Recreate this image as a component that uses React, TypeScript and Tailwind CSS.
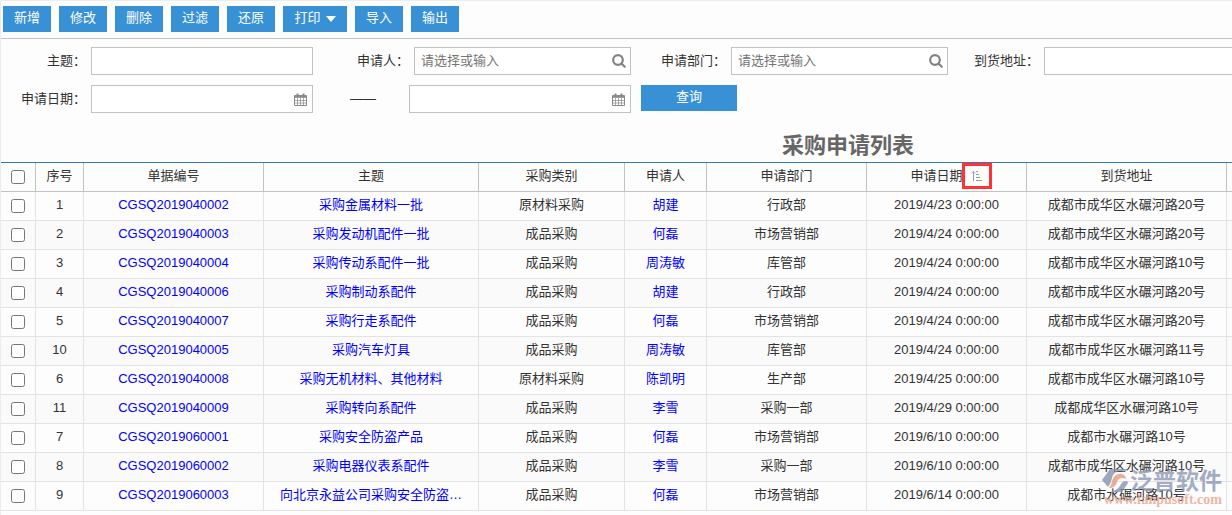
import { useState } from 'react'
import clsx from 'clsx'

type RequestRow = {
  no: number
  code: string
  subject: string
  category: string
  applicant: string
  department: string
  date: string
  address: string
}

const rows: RequestRow[] = [
  { no: 1, code: 'CGSQ2019040002', subject: '采购金属材料一批', category: '原材料采购', applicant: '胡建', department: '行政部', date: '2019/4/23 0:00:00', address: '成都市成华区水碾河路20号' },
  { no: 2, code: 'CGSQ2019040003', subject: '采购发动机配件一批', category: '成品采购', applicant: '何磊', department: '市场营销部', date: '2019/4/24 0:00:00', address: '成都市成华区水碾河路20号' },
  { no: 3, code: 'CGSQ2019040004', subject: '采购传动系配件一批', category: '成品采购', applicant: '周涛敏', department: '库管部', date: '2019/4/24 0:00:00', address: '成都市成华区水碾河路10号' },
  { no: 4, code: 'CGSQ2019040006', subject: '采购制动系配件', category: '成品采购', applicant: '胡建', department: '行政部', date: '2019/4/24 0:00:00', address: '成都市成华区水碾河路20号' },
  { no: 5, code: 'CGSQ2019040007', subject: '采购行走系配件', category: '成品采购', applicant: '何磊', department: '市场营销部', date: '2019/4/24 0:00:00', address: '成都市成华区水碾河路20号' },
  { no: 10, code: 'CGSQ2019040005', subject: '采购汽车灯具', category: '成品采购', applicant: '周涛敏', department: '库管部', date: '2019/4/24 0:00:00', address: '成都市成华区水碾河路11号' },
  { no: 6, code: 'CGSQ2019040008', subject: '采购无机材料、其他材料', category: '原材料采购', applicant: '陈凯明', department: '生产部', date: '2019/4/25 0:00:00', address: '成都市成华区水碾河路10号' },
  { no: 11, code: 'CGSQ2019040009', subject: '采购转向系配件', category: '成品采购', applicant: '李雪', department: '采购一部', date: '2019/4/29 0:00:00', address: '成都成华区水碾河路10号' },
  { no: 7, code: 'CGSQ2019060001', subject: '采购安全防盗产品', category: '成品采购', applicant: '何磊', department: '市场营销部', date: '2019/6/10 0:00:00', address: '成都市水碾河路10号' },
  { no: 8, code: 'CGSQ2019060002', subject: '采购电器仪表系配件', category: '成品采购', applicant: '李雪', department: '采购一部', date: '2019/6/10 0:00:00', address: '成都市成华区水碾河路10号' },
  { no: 9, code: 'CGSQ2019060003', subject: '向北京永益公司采购安全防盗…', category: '成品采购', applicant: '何磊', department: '市场营销部', date: '2019/6/14 0:00:00', address: '成都市水碾河路10号' },
]

const toolbar = ['新增', '修改', '删除', '过滤', '还原', '打印', '导入', '输出']

const inputClass = 'h-7 w-full rounded-none border border-[#c2c2c2] bg-white px-[6px] pb-[2px] text-[13px] text-[#333] outline-none placeholder:text-[#757575]'
const headClass = 'h-[29px] border-r border-b border-[#c2c2c2] px-0 pt-0 text-center font-normal'
const cellClass = 'h-[29px] border-r border-b border-[#e3e3e3] px-0 pt-0 text-center'
const linkClass = 'text-[#0000ff]'

function CalendarIcon() {
  return (
    <svg viewBox="0 0 13 13" className="h-[13px] w-[13px]" fill="none" stroke="#8a8a8a" aria-hidden="true">
      <path d="M0.5 2.5h12v10h-12z" />
      <path d="M1 3h11v1.5h-11z" fill="#8a8a8a" strokeWidth="0.6" />
      <path d="M3.5 0.5v3M9.5 0.5v3" strokeWidth="2" />
      <path d="M3.5 5v7.5M6.5 5v7.5M9.5 5v7.5M0.5 7.5h12M0.5 10h12" strokeWidth="0.7" />
    </svg>
  )
}

function SearchIcon() {
  return (
    <svg viewBox="0 0 14 14" className="h-[14px] w-[14px]" fill="none" stroke="#828282" strokeWidth="2.2" aria-hidden="true">
      <circle cx="6" cy="6" r="4.8" />
      <path d="M9.5 9.5l3.2 3.2" strokeLinecap="round" />
    </svg>
  )
}

function SortIcon() {
  return (
    <svg viewBox="0 0 12 12" className="h-3 w-3" fill="none" stroke="#999" aria-hidden="true">
      <path d="M2.5 11V1.5" />
      <path d="M0.5 3.2l2-1.8l2 1.8" strokeWidth="0.8" />
      <path d="M5 1.5h2M5 4.5h3M5 7.5h4M5 10.5h6" />
    </svg>
  )
}

function LookupInput({ id }: { id: string }) {
  return (
    <div className="relative w-[217px]">
      <input id={id} type="text" placeholder="请选择或输入" className={inputClass} />
      <button type="button" aria-label="选择" className="absolute top-[7px] right-[5px]">
        <SearchIcon />
      </button>
    </div>
  )
}

function DateInput({ id, label }: { id: string; label?: string }) {
  return (
    <div className="relative w-[222px]">
      <input id={id} type="text" aria-label={label} className={inputClass} />
      <button type="button" aria-label="选择日期" className="absolute top-2 right-[6px]">
        <CalendarIcon />
      </button>
    </div>
  )
}

function Watermark() {
  return (
    <div className="pointer-events-none absolute right-[10px] bottom-[10px] text-right opacity-80">
      <div className="flex items-center justify-end gap-px">
        <svg viewBox="0 0 27 26" className="h-[26px] w-[27px]" aria-hidden="true">
          <path d="M8 1h18l-4 3c-6-2-11 1-12 6c-1 4-2 7-4 9L0 12z" fill="#8794b0" />
          <path d="M10 14c1-6 5-9 10-8c3 1 4 3 4 5c-4-2-8-1-9 3c-1 4-4 6-8 6c2-2 2-4 3-6z" fill="#e59a80" />
          <path d="M9 23c5 0 8-3 10-7c1-2 3-3 6-3l1 2l-6 9h-10z" fill="#8794b0" />
        </svg>
        <span className="text-[23px] leading-7 font-bold text-[#8d99b5]">泛普软件</span>
      </div>
      <p className="font-['Liberation_Serif',serif] text-[14px] leading-[10px] font-bold text-[#e8a590]">www.fanpusoft.com</p>
    </div>
  )
}

export default function App() {
  const [selected, setSelected] = useState<number[]>([])
  const allSelected = selected.length === rows.length

  const toggle = (no: number) => {
    setSelected((prev) => (prev.includes(no) ? prev.filter((n) => n !== no) : [...prev, no]))
  }

  return (
    <main lang="zh-CN" className="relative overflow-hidden border-l border-[#ececec] bg-[#fdfdfd] pb-1 font-['Liberation_Sans','Noto_Sans_CJK_SC',sans-serif] text-[13px] leading-5 text-[#333]">
      <div className="min-w-[1694px]">
        <div className="flex gap-2 border-t border-b border-t-[#ececec] border-b-[#c2c2c2] px-[2px] pt-[5px] pb-[6px]">
          {toolbar.map((label) => (
            <button
              key={label}
              type="button"
              className={clsx('flex h-[26px] items-center justify-center gap-[5px] bg-[#3991d5] pb-[2px] text-white', label === '打印' ? 'w-16' : 'w-12')}
            >
              {label}
              {label === '打印' ? (
                <svg viewBox="0 0 10 6" className="mt-[2px] h-[6px] w-[10px]" fill="white" aria-hidden="true">
                  <path d="M0 0h10L5 6z" />
                </svg>
              ) : null}
            </button>
          ))}
        </div>

        <form onSubmit={(e) => e.preventDefault()} className="flex flex-col gap-[10px] pt-2">
          <div className="flex">
            <label htmlFor="subject" className="w-[90px] py-1 pr-[5px] text-right">主题：</label>
            <div className="w-[222px]">
              <input id="subject" type="text" className={inputClass} />
            </div>
            <label htmlFor="applicant" className="w-[101px] py-1 pr-[5px] text-right">申请人：</label>
            <LookupInput id="applicant" />
            <label htmlFor="department" className="w-[100px] py-1 pr-[5px] text-right">申请部门：</label>
            <LookupInput id="department" />
            <label htmlFor="address" className="w-24 py-1 pr-[5px] text-right">到货地址：</label>
            <div className="flex-1">
              <input id="address" type="text" className={inputClass} />
            </div>
          </div>
          <div className="flex">
            <label htmlFor="date-from" className="w-[90px] py-1 pr-[5px] text-right">申请日期：</label>
            <DateInput id="date-from" />
            <span className="w-24 py-1 pl-1 text-center">——</span>
            <DateInput id="date-to" label="申请日期截止" />
            <button type="submit" className="ml-[10px] h-[26px] w-24 bg-[#3991d5] pb-[2px] text-white">查询</button>
          </div>
        </form>

        <h1 className="pt-[17px] text-center text-[22px] leading-8 font-bold text-[#666]">采购申请列表</h1>

        <table className="w-full table-fixed border-separate border-spacing-0 border-t border-[#337ab7]">
          <colgroup>
            <col className="w-[35px]" />
            <col className="w-12" />
            <col className="w-[180px]" />
            <col className="w-[215px]" />
            <col className="w-[146px]" />
            <col className="w-[82px]" />
            <col className="w-40" />
            <col className="w-40" />
            <col className="w-[200px]" />
            <col />
          </colgroup>
          <thead>
            <tr>
              <th className={clsx(headClass, 'pb-0')}>
                <input
                  type="checkbox"
                  aria-label="全选"
                  checked={allSelected}
                  onChange={() => setSelected(allSelected ? [] : rows.map((r) => r.no))}
                  className="mx-auto block h-[14px] w-[14px]"
                />
              </th>
              <th className={clsx(headClass, 'pb-[2px]')}>序号</th>
              <th className={clsx(headClass, 'pb-[2px]')}>单据编号</th>
              <th className={clsx(headClass, 'pb-[2px]')}>主题</th>
              <th className={clsx(headClass, 'pb-[2px]')}>采购类别</th>
              <th className={clsx(headClass, 'pb-[2px]')}>申请人</th>
              <th className={clsx(headClass, 'pb-[2px]')}>申请部门</th>
              <th className={clsx(headClass, 'pb-[2px]')}>
                <div className="flex items-center justify-center gap-2">
                  申请日期
                  <button type="button" aria-label="升序" className="relative">
                    <SortIcon />
                    <span className="absolute -inset-x-[9px] -inset-y-[7px] border-3 border-[#ff3333]" />
                  </button>
                </div>
              </th>
              <th className={clsx(headClass, 'pb-[2px]')}>到货地址</th>
              <th className={clsx(headClass, 'pb-[2px]')} />
            </tr>
          </thead>
          <tbody>
            {rows.map((r) => (
              <tr key={r.no} className="even:bg-[#fafafa]">
                <td className={clsx(cellClass, 'pb-0')}>
                  <input
                    type="checkbox"
                    aria-label={r.code}
                    checked={selected.includes(r.no)}
                    onChange={() => toggle(r.no)}
                    className="mx-auto block h-[14px] w-[14px]"
                  />
                </td>
                <td className={clsx(cellClass, 'pb-[2px]')}>{r.no}</td>
                <td className={clsx(cellClass, 'pb-[2px]')}>
                  <a href="#" className={linkClass}>{r.code}</a>
                </td>
                <td className={clsx(cellClass, 'pb-[2px]')}>
                  <a href="#" className={linkClass}>{r.subject}</a>
                </td>
                <td className={clsx(cellClass, 'pb-[2px]')}>{r.category}</td>
                <td className={clsx(cellClass, 'pb-[2px]')}>
                  <a href="#" className={linkClass}>{r.applicant}</a>
                </td>
                <td className={clsx(cellClass, 'pb-[2px]')}>{r.department}</td>
                <td className={clsx(cellClass, 'pb-[2px]')}>{r.date}</td>
                <td className={clsx(cellClass, 'pb-[2px]')}>{r.address}</td>
                <td className={clsx(cellClass, 'pb-[2px]')} />
              </tr>
            ))}
          </tbody>
        </table>
      </div>
      <Watermark />
    </main>
  )
}
